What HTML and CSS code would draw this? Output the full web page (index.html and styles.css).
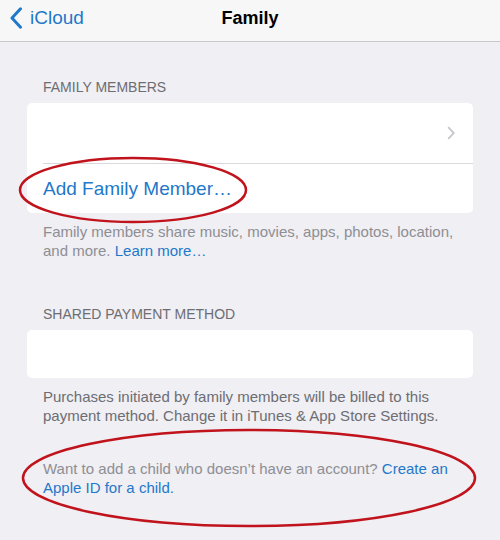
FILE: index.html
```html
<!DOCTYPE html>
<html lang="en">
<head>
    <meta charset="UTF-8">
    <meta name="viewport" content="width=device-width, initial-scale=1.0">
    <title>Family</title>
    <link rel="stylesheet" href="styles.css">
</head>
<body>
    <header class="nav">
        <a class="navBack" href="#">
            <svg class="backChevron" width="14" height="22" viewBox="0 0 14 22">
                <path d="M11.5 1.8 L3 11 L11.5 20.2" fill="none" stroke="currentColor" stroke-width="3" stroke-linecap="round" stroke-linejoin="round"/>
            </svg>
            <span>iCloud</span>
        </a>
        <h1 class="navTitle">Family</h1>
        <span></span>
    </header>

    <main class="content">
        <section class="group">
            <h2 class="groupHeader">Family Members</h2>
            <div class="card">
                <div class="cell cellMember">
                    <svg class="cellChevron" width="8" height="14" viewBox="0 0 8 14">
                        <path d="M1.2 1.2 L6.8 7 L1.2 12.8" fill="none" stroke="currentColor" stroke-width="1.8"/>
                    </svg>
                </div>
                <div class="cell cellAction">Add Family Member…</div>
            </div>
            <p class="groupFooter"><span>Family members share music, movies, apps, photos, location,</span> <span>and more.</span> <a href="#">Learn more…</a></p>
        </section>

        <section class="group">
            <h2 class="groupHeader">Shared Payment Method</h2>
            <div class="card">
                <div class="cell cellPayment"></div>
            </div>
            <p class="groupFooter dark">Purchases initiated by family members will be billed to this payment method. Change it in iTunes &amp; App Store Settings.</p>
            <p class="groupFooter note"><span>Want to add a child who doesn’t have an account?</span> <a href="#">Create an</a> <a href="#">Apple ID for a child.</a></p>
        </section>
    </main>

    <!-- red marker rings drawn over the screenshot -->
    <svg class="marks" width="500" height="540" viewBox="0 0 500 540">
        <ellipse cx="133" cy="190" rx="113" ry="32" fill="none" stroke="#c1131c" stroke-width="2.5"/>
        <ellipse cx="249" cy="478" rx="226" ry="48" fill="none" stroke="#c1131c" stroke-width="2.5"/>
    </svg>
</body>
</html>
```

FILE: styles.css
```css
html {
    background-color: #efeff4;
}
body {
    margin: 0;
    position: relative;
    min-height: 540px;
    font-family: "Liberation Sans", Arial, sans-serif;
    color: #000;
}
a {
    color: #1f78c9;
    text-decoration: none;
}
.nav {
    display: grid;
    grid-template-columns: 1fr auto 1fr;
    align-items: center;
    height: 36px;
    padding-bottom: 5px;
    background-color: #f7f7f8;
    border-bottom: 1px solid #c8c7cc;
}
.navBack {
    display: flex;
    align-items: center;
    gap: 7px;
    padding-left: 9px;
    font-size: 19px;
}
.backChevron {
    display: block;
}
.navTitle {
    margin: 0;
    font-size: 18px;
    font-weight: bold;
}
.group {
    padding-top: 37px;
}
.group + .group {
    padding-top: 46px;
}
.groupHeader {
    margin: 0;
    padding: 0 43px;
    font-size: 14px;
    line-height: 17px;
    font-weight: normal;
    text-transform: uppercase;
    color: #6d6d72;
}
.card {
    margin: 7px 27px 0;
    background-color: #fff;
    border-radius: 5px;
    overflow: hidden;
}
.cell {
    margin-left: 16px;
    padding-right: 18px;
    display: flex;
    align-items: center;
}
.cell + .cell {
    border-top: 1px solid #d9d9dd;
}
.cellMember {
    height: 60px;
    justify-content: flex-end;
}
.cellChevron {
    color: #c7c7cc;
}
.cellAction {
    height: 49px;
    font-size: 19px;
    color: #1f78c9;
}
.cellPayment {
    height: 48px;
}
.groupFooter {
    margin: 9px 0 0;
    padding: 0 30px 0 43px;
    font-size: 15px;
    line-height: 19px;
    color: #8e8e93;
}
.groupFooter.dark {
    color: #6d6d72;
}
.groupFooter.note {
    margin-top: 34px;
}
.marks {
    position: absolute;
    top: 0;
    left: 0;
    pointer-events: none;
}
```
